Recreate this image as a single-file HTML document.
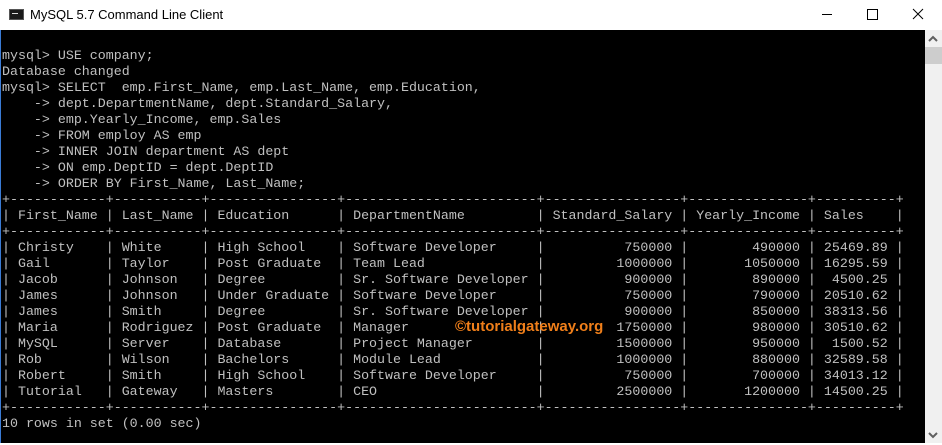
<!DOCTYPE html>
<html><head><meta charset="utf-8"><style>
html,body{margin:0;padding:0;width:942px;height:445px;overflow:hidden;background:#fff;}
.title{position:absolute;left:0;top:0;width:942px;height:30px;background:#fff;}
.title .t{position:absolute;left:30px;top:7px;font:13px "Liberation Sans",sans-serif;color:#000;}
.icon{position:absolute;left:9px;top:9px;width:15px;height:11px;background:#1a1a1a;border:1px solid #555;box-sizing:border-box;}
.icon i{position:absolute;left:2px;top:3px;width:6px;height:3px;border-top:1px solid #ddd;}
.term{position:absolute;left:0;top:30px;width:924px;height:413px;background:#000;border-left:1px solid #3a7bd5;}
pre{position:absolute;left:1px;top:18px;margin:0;font:13.3px/16px "Liberation Mono",monospace;color:#c0c0c0;letter-spacing:0;}
.sb{position:absolute;left:925px;top:30px;width:17px;height:413px;background:#f0f0f0;}
.thumb{position:absolute;left:925px;top:47px;width:17px;height:17px;background:#cdcdcd;}
.wm{position:absolute;left:455px;top:318px;font:bold 15px "Liberation Sans",sans-serif;color:#f07f1a;}
</style></head><body>
<div class="title"><div class="icon"><i></i></div><div class="t">MySQL 5.7 Command Line Client</div>
<div style="position:absolute;left:822px;top:14px;width:10px;height:1px;background:#000"></div>
<div style="position:absolute;left:867px;top:9px;width:9px;height:9px;border:1px solid #000"></div>
<svg style="position:absolute;left:912px;top:8px" width="12" height="12"><path d="M1 1L11 11M11 1L1 11" stroke="#000" stroke-width="1"/></svg>
</div>
<div class="term"><pre>mysql> USE company;
Database changed
mysql> SELECT  emp.First_Name, emp.Last_Name, emp.Education,
    -> dept.DepartmentName, dept.Standard_Salary,
    -> emp.Yearly_Income, emp.Sales
    -> FROM employ AS emp
    -> INNER JOIN department AS dept
    -> ON emp.DeptID = dept.DeptID
    -> ORDER BY First_Name, Last_Name;
+------------+-----------+----------------+------------------------+-----------------+---------------+----------+
| First_Name | Last_Name | Education      | DepartmentName         | Standard_Salary | Yearly_Income | Sales    |
+------------+-----------+----------------+------------------------+-----------------+---------------+----------+
| Christy    | White     | High School    | Software Developer     |          750000 |        490000 | 25469.89 |
| Gail       | Taylor    | Post Graduate  | Team Lead              |         1000000 |       1050000 | 16295.59 |
| Jacob      | Johnson   | Degree         | Sr. Software Developer |          900000 |        890000 |  4500.25 |
| James      | Johnson   | Under Graduate | Software Developer     |          750000 |        790000 | 20510.62 |
| James      | Smith     | Degree         | Sr. Software Developer |          900000 |        850000 | 38313.56 |
| Maria      | Rodriguez | Post Graduate  | Manager                |         1750000 |        980000 | 30510.62 |
| MySQL      | Server    | Database       | Project Manager        |         1500000 |        950000 |  1500.52 |
| Rob        | Wilson    | Bachelors      | Module Lead            |         1000000 |        880000 | 32589.58 |
| Robert     | Smith     | High School    | Software Developer     |          750000 |        700000 | 34013.12 |
| Tutorial   | Gateway   | Masters        | CEO                    |         2500000 |       1200000 | 14500.25 |
+------------+-----------+----------------+------------------------+-----------------+---------------+----------+
10 rows in set (0.00 sec)</pre></div>
<div class="sb"></div><div class="thumb"></div>
<svg style="position:absolute;left:928px;top:35px" width="10" height="8"><path d="M1 6L5 2L9 6" stroke="#606060" stroke-width="2" fill="none"/></svg>
<svg style="position:absolute;left:928px;top:431px" width="10" height="8"><path d="M1 2L5 6L9 2" stroke="#606060" stroke-width="2" fill="none"/></svg>
<div class="wm">©tutorialgateway.org</div>
</body></html>
